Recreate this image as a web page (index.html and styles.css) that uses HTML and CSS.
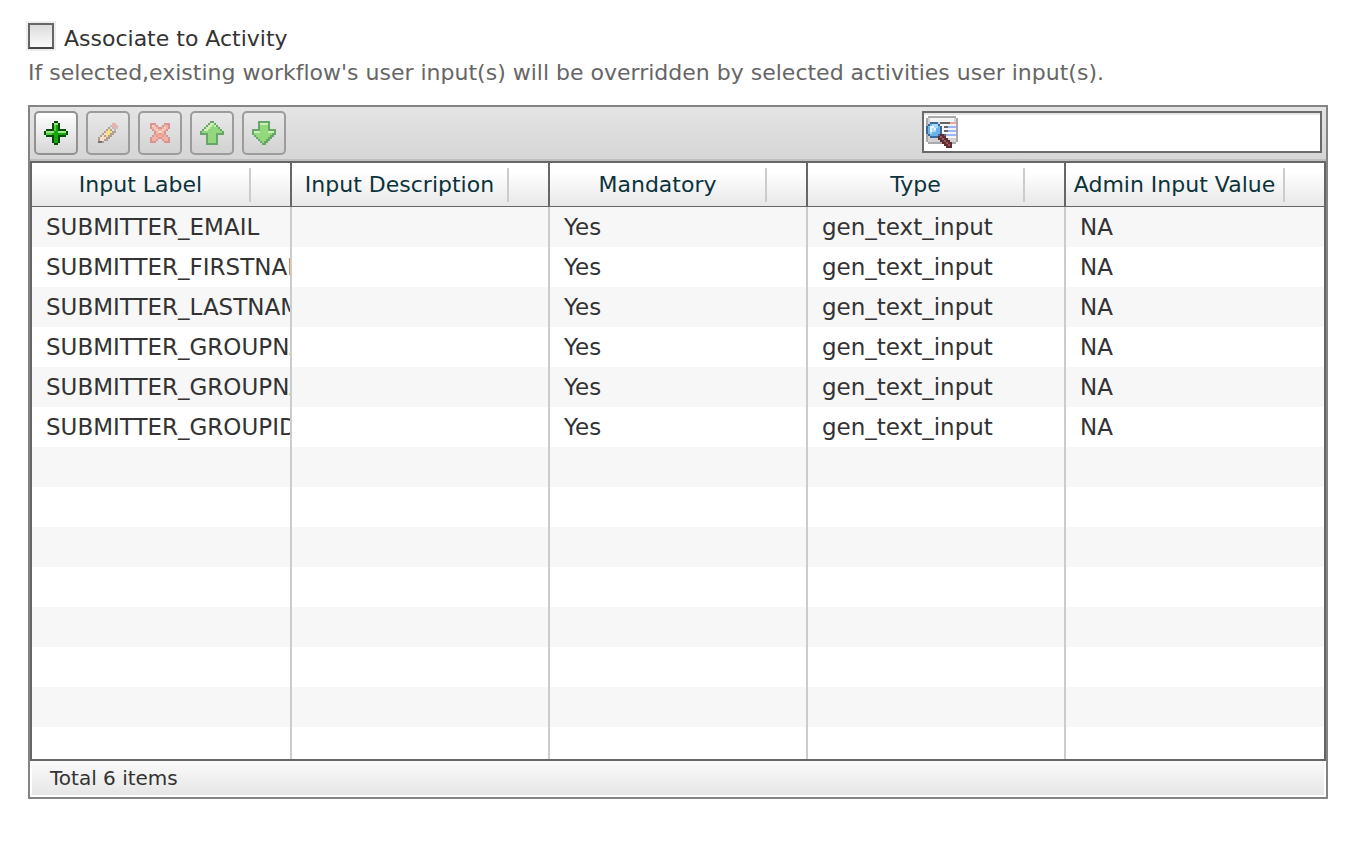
FILE: index.html
```html
<!DOCTYPE html>
<html lang="en">
<head>
<meta charset="utf-8">
<title>Workflow User Inputs</title>
<link rel="stylesheet" href="styles.css">
</head>
<body>
<main class="page">
  <div class="option">
    <input class="option-box" type="checkbox" id="associate">
    <label for="associate">Associate to Activity</label>
  </div>
  <p class="hint">If selected,existing workflow's user input(s) will be overridden by selected activities user input(s).</p>

  <section class="panel">
    <div class="toolbar">
      <div class="actions">
        <button class="tool tool-active" type="button" aria-label="Add">
          <svg viewBox="0 0 24 24" shape-rendering="crispEdges"><path fill="#064d0a" d="M10 0h4v2h2v6h6v2h2v4h-2v2h-6v6h-2v2h-4v-2H8v-6H2v-2H0v-4h2V8h6V2h2z"/><path fill="#18a60d" d="M10 2h4v8h8v4h-8v8h-4v-8H2v-4h8z"/><path fill="#9be584" d="M10 2h4v2h-4zM2 10h8v2H2zM14 10h8v2h-8z"/><path fill="#52cf37" d="M10 4h2v6h-2zM2 12h6v2H2z"/></svg>
        </button>
        <button class="tool" type="button" aria-label="Edit">
          <svg viewBox="0 0 24 24" shape-rendering="crispEdges"><path fill="#b39d8c" d="M16 2h4v2h2v4h-2v4h-2v2h-2v2h-2v2h-2v2H8v2H2v-6h2v-2h2v-2h2v-2h2V8h2V6h2V4h2z"/><path fill="#e4b4b0" d="M16 2h4v2h2v4h-4V6h-2z"/><path fill="#b9bcc4" d="M14 4h2v2h2v2h2v2h-4V8h-2z"/><path fill="#e0e1e4" d="M14 6h2v2h2v2h-2V8h-2z"/><path fill="#f8e08a" d="M12 8h2v2h2v2h-2v2h-2v2h-2v2H8v-2h2v-2H8v-2h2v-2h2z"/><path fill="#f4dfcf" d="M8 12h2v2H8v2h2v2H8v2H4v-4h2v-2h2z"/><path fill="#77716e" d="M2 20h4v2H2z"/></svg>
        </button>
        <button class="tool" type="button" aria-label="Delete">
          <svg viewBox="0 0 24 24" shape-rendering="crispEdges"><path fill="#de928e" d="M2 2h6v2h2v2h4V4h2V2h6v6h-2v2h-2v4h2v2h2v6h-6v-2h-2v-2h-4v2H8v2H2v-6h2v-2h2v-4H4V8H2z"/><path fill="#f0b3a8" d="M4 4h4v2h2v2h4V6h2V4h4v4h-2v2h-2v4h2v2h2v4h-4v-2h-2v-2h-4v2H8v2H4v-4h2v-2h2v-4H6V8H4z"/><path fill="#f6d3ca" d="M4 4h2v2H4zM6 6h2v2H6zM8 8h2v2H8zM10 10h4v2h-4zM14 8h2v2h-2zM16 6h2v2h-2z"/><path fill="#e8988c" d="M8 14h2v2H8zM14 14h2v2h-2zM10 12h4v2h-4z"/></svg>
        </button>
        <button class="tool" type="button" aria-label="Move up">
          <svg viewBox="0 0 24 24" shape-rendering="crispEdges"><path fill="#68a568" d="M10 0h4v2h2v2h2v2h2v2h2v2h2v4h-6v10H6V14H0v-4h2V8h2V6h2V4h2V2h2z"/><path fill="#92d97e" d="M10 2h4v2h2v2h2v2h2v2h2v2h-6v10H8V12H2v-2h2V8h2V6h2V4h2z"/><path fill="#d0efb8" d="M10 2h4v2h2v2h-2V4h-2v2h-2v2H8v2H4V8h2V6h2V4h2z"/></svg>
        </button>
        <button class="tool" type="button" aria-label="Move down">
          <svg viewBox="0 0 24 24" shape-rendering="crispEdges"><path fill="#68a568" d="M6 0h12v8h6v6h-2v2h-2v2h-2v2h-2v2h-2v2h-4v-2H8v-2H6v-2H4v-2H2v-2H0V8h6z"/><path fill="#92d97e" d="M8 2h8v8h6v2h-2v2h-2v2h-2v2h-2v2h-2v2h-2v-2H8v-2H6v-2H4v-2H2v-2h6z"/><path fill="#d0efb8" d="M8 2h8v2H8zM2 10h6v2H2zM16 10h6v2h-6z"/></svg>
        </button>
      </div>
      <div class="search">
        <svg class="search-icon" viewBox="0 0 32 32" shape-rendering="crispEdges"><path fill="#a9a9a9" d="M2 0h28v2h2v24h-2v2H2v-2H0V2h2z"/><path fill="#d2d2d4" d="M2 2h28v24H2z"/><path fill="#f4f4f6" d="M4 2h24v4H4zM14 8h16v14H14z"/><path fill="#f2a5a2" d="M24 6h6v2h-6z"/><path fill="#666" d="M14 6h10v2H14zM18 10h4v2h-4zM18 14h4v2h-4zM18 18h2v2h-2z"/><path fill="#9ab6f4" d="M22 10h8v2h-8zM22 14h8v2h-8zM20 18h10v2H20z"/><path fill="#376b9f" d="M4 6h8v2h2v2h2v8h-2v2h-2v2H4v-2H2v-2H0v-8h2V8h2z"/><path fill="#6fb2e4" d="M4 8h8v2h2v8h-2v2H4v-2H2v-8h2z"/><path fill="#a9dcfb" d="M6 8h6v4h-2v4H6v2H4v-6h2z"/><path fill="#e6f6ff" d="M4 10h4v2H6v4H4zM8 12h2v2H8z"/><path fill="#5f2c30" d="M14 18h4v2h2v2h2v2h2v2h2v6h-6v-2h-2v-2h-2v-2h-2v-2h-2v-4h2z"/><path fill="#9a5b5e" d="M14 20h2v2h2v2h2v2h2v2h2v2h-2v-2h-2v-2h-2v-2h-2v-2h-2z"/></svg>
        <input class="search-field" type="text" aria-label="Search">
      </div>
    </div>

    <div class="grid">
      <table class="inputs">
        <colgroup><col class="col-label"><col><col><col><col></colgroup>
        <thead>
          <tr>
            <th scope="col"><div class="head">Input Label</div></th>
            <th scope="col"><div class="head">Input Description</div></th>
            <th scope="col"><div class="head">Mandatory</div></th>
            <th scope="col"><div class="head">Type</div></th>
            <th scope="col"><div class="head">Admin Input Value</div></th>
          </tr>
        </thead>
        <tbody>
          <tr><td>SUBMITTER_EMAIL</td><td></td><td>Yes</td><td>gen_text_input</td><td>NA</td></tr>
          <tr><td>SUBMITTER_FIRSTNAME</td><td></td><td>Yes</td><td>gen_text_input</td><td>NA</td></tr>
          <tr><td>SUBMITTER_LASTNAME</td><td></td><td>Yes</td><td>gen_text_input</td><td>NA</td></tr>
          <tr><td>SUBMITTER_GROUPNAME</td><td></td><td>Yes</td><td>gen_text_input</td><td>NA</td></tr>
          <tr><td>SUBMITTER_GROUPNAME</td><td></td><td>Yes</td><td>gen_text_input</td><td>NA</td></tr>
          <tr><td>SUBMITTER_GROUPID</td><td></td><td>Yes</td><td>gen_text_input</td><td>NA</td></tr>
          <tr><td></td><td></td><td></td><td></td><td></td></tr>
          <tr><td></td><td></td><td></td><td></td><td></td></tr>
          <tr><td></td><td></td><td></td><td></td><td></td></tr>
          <tr><td></td><td></td><td></td><td></td><td></td></tr>
          <tr><td></td><td></td><td></td><td></td><td></td></tr>
          <tr><td></td><td></td><td></td><td></td><td></td></tr>
          <tr><td></td><td></td><td></td><td></td><td></td></tr>
          <tr class="last"><td></td><td></td><td></td><td></td><td></td></tr>
        </tbody>
      </table>
    </div>
    <div class="summary">Total 6 items</div>
  </section>
</main>
</body>
</html>
```
FILE: styles.css
```css
* { box-sizing: border-box; }

body {
  margin: 0;
  background: #fff;
  color: #333;
  font-family: Verdana, "DejaVu Sans", sans-serif;
  font-size: 22px;
  font-variant-ligatures: none;
}

.page { padding: 22px 40px 24px 28px; }

.option {
  display: flex;
  align-items: center;
  gap: 10px;
  height: 32px;
}

.option-box {
  appearance: none;
  width: 26px;
  height: 26px;
  margin: 0 0 4px;
  border: 2px solid #666;
  border-bottom-color: #444;
  background: linear-gradient(#dcdcdc, #fafafa);
  box-shadow: 0 0 0 2px #eee;
}

.hint {
  margin: 0 0 13px;
  color: #666;
  line-height: 38px;
  white-space: nowrap;
}

.panel { border: 2px solid #848484; }

.toolbar {
  display: flex;
  align-items: flex-start;
  justify-content: space-between;
  height: 54px;
  padding: 4px;
  border-bottom: 2px solid #bebebe;
  background: linear-gradient(#e4e4e4, #d6d6d6);
}

.actions { display: flex; gap: 8px; }

.tool {
  display: flex;
  align-items: center;
  justify-content: center;
  width: 44px;
  height: 44px;
  padding: 0;
  border: 2px solid #9c9c9c;
  border-radius: 5px;
  background: linear-gradient(#e8e8e8, #d2d2d2);
}

.tool-active {
  border-color: #929292;
  background: linear-gradient(#fff, #d6d6d6);
}

.tool svg { width: 24px; height: 24px; }

.search {
  display: flex;
  align-items: center;
  width: 400px;
  height: 42px;
  padding-left: 2px;
  border: 2px solid #6b6b6b;
  background: #fff;
  box-shadow: inset 0 2px #e6e6e6;
}

.search-icon { flex: none; width: 32px; height: 32px; }

.search-field {
  flex: 1;
  min-width: 0;
  border: 0;
  outline: 0;
  background: transparent;
  font: inherit;
}

.grid { border: 2px solid #666; }

.inputs {
  width: 100%;
  border-collapse: separate;
  border-spacing: 0;
  table-layout: fixed;
}

.col-label { width: 260px; }

.inputs th {
  height: 44px;
  padding: 0 39px 0 0;
  border-right: 2px solid #666;
  border-bottom: 1px solid #666;
  background: linear-gradient(#fff 20%, #e8e8e8);
  color: #0b333c;
  font-weight: 400;
}

.head {
  height: 34px;
  border-right: 2px solid #ccc;
  line-height: 34px;
  white-space: nowrap;
}

.inputs td {
  height: 40px;
  padding: 0 0 0 14px;
  border-right: 2px solid #ccc;
  overflow: hidden;
  font-size: 23px;
  line-height: 40px;
  white-space: nowrap;
}

.inputs th:last-child,
.inputs td:last-child { border-right: 0; }

.inputs tbody tr:nth-child(odd) { background: #f7f7f7; }
.inputs .last td { height: 32px; }

.summary {
  height: 36px;
  padding-left: 18px;
  border: solid #fff;
  border-width: 0 2px 2px;
  background: linear-gradient(#fafafa, #e6e6e6);
  font-size: 20px;
  line-height: 34px;
}
```
